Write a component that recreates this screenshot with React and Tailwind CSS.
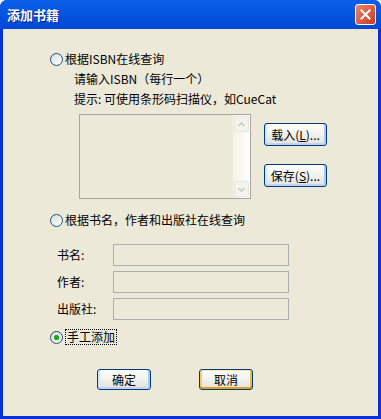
import React from 'react'

const font = { fontFamily: '"Noto Sans CJK SC", "Liberation Sans", sans-serif' }

const Radio = ({ checked }) => (
	<span className="relative inline-flex h-[13px] w-[13px] shrink-0 items-center justify-center rounded-full border border-[#1c5180] bg-gradient-to-br from-[#dcdcd7] to-white">
		{checked && <span className="h-[5px] w-[5px] rounded-full bg-[#21a121] shadow-[0_0_1px_#6bd36b]" />}
	</span>
)

const XpButton = ({ children, hover, className = '' }) => (
	<div
		className={`flex items-center justify-center rounded-[3px] border border-[#003c74] bg-gradient-to-b from-white to-[#e3e3db] text-black ${
			hover
				? 'shadow-[inset_0_-2px_0_#e5a01a,inset_0_1px_0_#ffe7a2,inset_2px_0_0_#fbca61,inset_-2px_0_0_#f5b73a]'
				: 'shadow-[inset_0_-2px_0_#c1d3fb,inset_2px_0_0_#cee7ff,inset_-2px_0_0_#adc6f3]'
		} ${className}`}
	>
		{children}
	</div>
)

const Field = ({ label }) => (
	<div className="flex h-[22px] items-center">
		<span className="w-[56px]">{label}</span>
		<div className="h-[22px] w-[176px] border border-[#a7aeb6] bg-[#ece9d8]" />
	</div>
)

export default function App() {
	return (
		<div className="flex h-[419px] w-[381px] flex-col overflow-hidden rounded-t-[7px] bg-[#0831d9] text-[12px] text-black" style={font}>
			{/* title bar */}
			<div className="flex h-[29px] shrink-0 items-center justify-between bg-gradient-to-b from-[#0a5fe8] via-[#0555e0] to-[#0348d4] pl-[7px] pr-[5px]">
				<span className="text-[13px] font-bold text-white [text-shadow:1px_1px_0_#0a1e8c]">添加书籍</span>
				<div className="flex h-[21px] w-[21px] items-center justify-center rounded-[3px] border border-white bg-gradient-to-br from-[#e8846a] to-[#c6391a]">
					<svg width="11" height="11" viewBox="0 0 11 11">
						<path d="M1.5 1.5 L9.5 9.5 M9.5 1.5 L1.5 9.5" stroke="white" strokeWidth="2" strokeLinecap="square" />
					</svg>
				</div>
			</div>

			{/* body */}
			<div className="mx-[3px] mb-[3px] flex flex-1 flex-col bg-[#ece9d8] pl-[47px] pt-[20px]">
				<div className="flex h-[20px] items-center gap-[2px]">
					<Radio />
					<span>根据ISBN在线查询</span>
				</div>
				<div className="ml-[24px] flex h-[20px] items-center">请输入ISBN（每行一个）</div>
				<div className="ml-[24px] flex h-[19px] items-center">提示: 可使用条形码扫描仪，如CueCat</div>

				<div className="mt-[6px] flex">
					<div className="ml-[29px] flex h-[85px] w-[172px] border border-[#a5a5a5] bg-[#ece9d8]">
						<div className="flex-1" />
						<div className="flex w-[17px] flex-col justify-between bg-gradient-to-r from-[#f3f2ec] to-[#fefefb] p-px">
							<div className="flex h-[16px] items-center justify-center rounded-[2px] border border-[#e8e6dc] bg-[#f4f3ee]">
								<svg width="7" height="5" viewBox="0 0 7 5">
									<path d="M0.5 4 L3.5 1 L6.5 4" stroke="#c9c7ba" strokeWidth="1.4" fill="none" />
								</svg>
							</div>
							<div className="flex h-[16px] items-center justify-center rounded-[2px] border border-[#e8e6dc] bg-[#f4f3ee]">
								<svg width="7" height="5" viewBox="0 0 7 5">
									<path d="M0.5 1 L3.5 4 L6.5 1" stroke="#c9c7ba" strokeWidth="1.4" fill="none" />
								</svg>
							</div>
						</div>
					</div>
					<div className="ml-[13px] flex flex-col pt-[9px]">
						<XpButton className="h-[23px] w-[63px]">载入(<span className="underline">L</span>)...</XpButton>
						<XpButton className="mt-[18px] h-[23px] w-[63px]">保存(<span className="underline">S</span>)...</XpButton>
					</div>
				</div>

				<div className="mt-[11px] flex h-[20px] items-center gap-[2px]">
					<Radio />
					<span>根据书名，作者和出版社在线查询</span>
				</div>

				<div className="ml-[7px] mt-[14px] flex flex-col gap-[5px]">
					<Field label="书名:" />
					<Field label="作者:" />
					<Field label="出版社:" />
				</div>

				<div className="mt-[7px] flex h-[20px] items-center gap-[2px]">
					<Radio checked />
					<span className="border border-dotted border-black px-px leading-[14px]">手工添加</span>
				</div>

				<div className="mt-[22px] flex">
					<XpButton className="ml-[47px] h-[21px] w-[54px]">确定</XpButton>
					<XpButton hover className="ml-[48px] h-[21px] w-[54px]">取消</XpButton>
				</div>
			</div>
		</div>
	)
}
